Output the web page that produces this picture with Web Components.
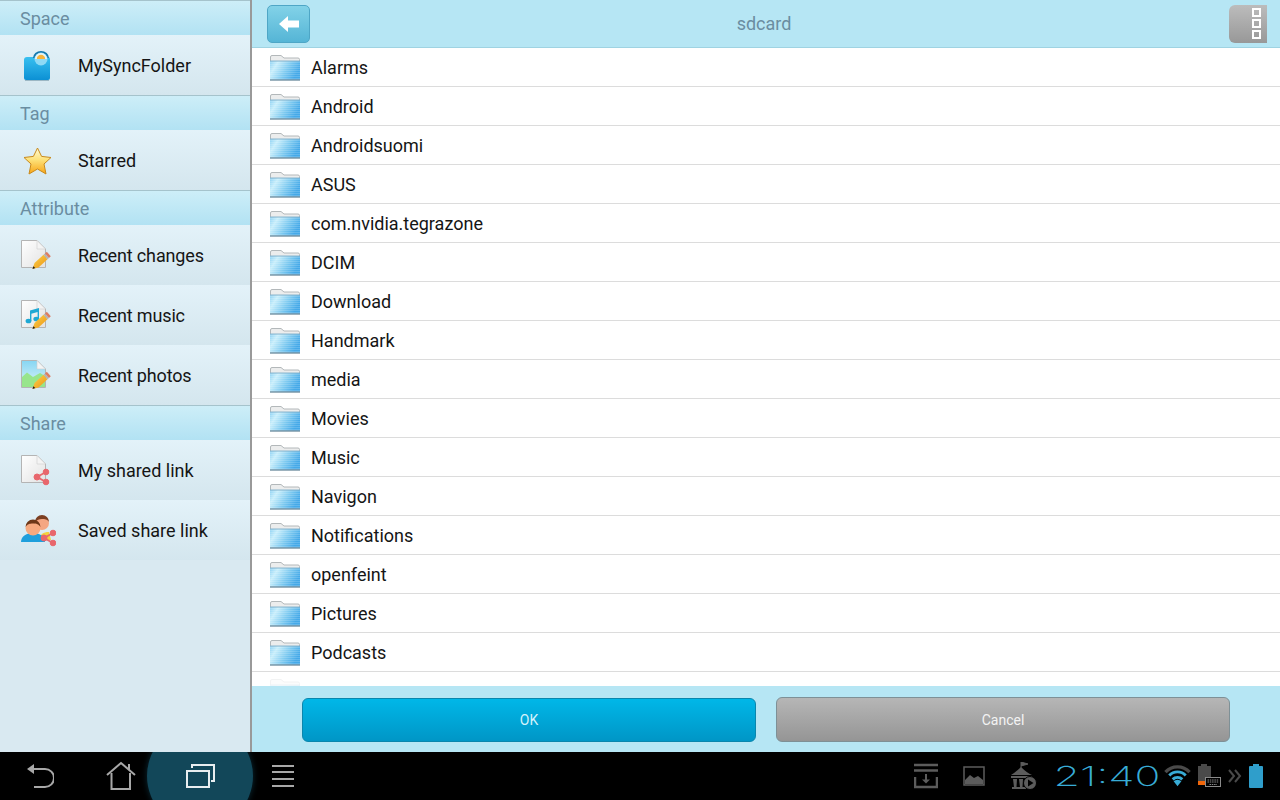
<!doctype html>
<html>
<head>
<meta charset="utf-8">
<title>sdcard</title>
<style>
  html, body { margin: 0; height: 100%; overflow: hidden; background: #000; }
</style>
</head>
<body>
<file-app>
  <side-panel slot="side">
    <side-header>Space</side-header>
    <side-item icon="sync">MySyncFolder</side-item>
    <side-header>Tag</side-header>
    <side-item icon="star">Starred</side-item>
    <side-header>Attribute</side-header>
    <side-item icon="changes" tight>Recent changes</side-item>
    <side-item icon="music" tight>Recent music</side-item>
    <side-item icon="photos" tight>Recent photos</side-item>
    <side-header>Share</side-header>
    <side-item icon="shared">My shared link</side-item>
    <side-item icon="saved">Saved share link</side-item>
  </side-panel>
  <top-bar slot="main">sdcard</top-bar>
  <file-list slot="main">
    <file-row>Alarms</file-row>
    <file-row>Android</file-row>
    <file-row>Androidsuomi</file-row>
    <file-row>ASUS</file-row>
    <file-row>com.nvidia.tegrazone</file-row>
    <file-row>DCIM</file-row>
    <file-row>Download</file-row>
    <file-row>Handmark</file-row>
    <file-row>media</file-row>
    <file-row>Movies</file-row>
    <file-row>Music</file-row>
    <file-row>Navigon</file-row>
    <file-row>Notifications</file-row>
    <file-row>openfeint</file-row>
    <file-row>Pictures</file-row>
    <file-row>Podcasts</file-row>
    <file-row faded></file-row>
  </file-list>
  <action-bar slot="main"></action-bar>
  <system-bar slot="bar"></system-bar>
</file-app>

<script>
/* Gradients are shared by every icon, so each svg carries its own copy of the defs. */
const DEFS = `<defs>
  <linearGradient id="fb" x1="0" y1="0" x2="0" y2="1"><stop offset="0" stop-color="#38c0f0"/><stop offset="1" stop-color="#0c90d4"/></linearGradient>
  <linearGradient id="st" x1="0" y1="0" x2="0" y2="1"><stop offset="0" stop-color="#fffbd6"/><stop offset=".45" stop-color="#fde27a"/><stop offset="1" stop-color="#f8a414"/></linearGradient>
  <linearGradient id="dc" x1="0" y1="0" x2="1" y2="1"><stop offset="0" stop-color="#ffffff"/><stop offset="1" stop-color="#e2e2e2"/></linearGradient>
  <linearGradient id="pn" x1="0" y1="0" x2="1" y2="1"><stop offset="0" stop-color="#fbd550"/><stop offset="1" stop-color="#ec9210"/></linearGradient>
  <linearGradient id="sk" x1="0" y1="0" x2="0" y2="1"><stop offset="0" stop-color="#86d6f3"/><stop offset="1" stop-color="#dff4f9"/></linearGradient>
</defs>`;

const DOC = `<path d="M1.5 3.5H17L25.5 12V30.5H1.5Z" fill="url(#dc)" stroke="#b4b4b4"/><path d="M17 3.5V12H25.5Z" fill="#f4f4f4" stroke="#cfcfcf" stroke-width=".6"/>`;
const PENCIL = `<path d="M12.5 32L14.500 26.100L23.500 17.800L27.500 22.200L18.500 30.500Z" fill="url(#pn)"/>
  <path d="M23.500 17.800L25 16.500L29 20.900L27.500 22.200Z" fill="#b4b4b4"/>
  <path d="M25 16.500L26.800 14.800L30.800 19.200L29 20.900Z" fill="#dd7d62"/>
  <path d="M12.500 32L13.400 29.300L15.300 31.100Z" fill="#1c1c1c"/>`;
const SHARE = (x, y) => `<g transform="translate(${x} ${y})" stroke="#e8666c" fill="#e8666c"><path d="M9 0L0 5L9 10" fill="none" stroke-width="1.8"/><circle cx="9" cy="0" r="2.800"/><circle cx="0" cy="5" r="3"/><circle cx="9" cy="10" r="2.800"/></g>`;

const SIDE_ICONS = {
  sync: `<path d="M4 13a3 3 0 0 1 3-3h21a2 2 0 0 1 2 2v19a2 2 0 0 1-2 2H6a2 2 0 0 1-2-2Z" fill="url(#fb)"/><path d="M5 33.500h24" stroke="#9cb7c4"/>
    <path d="M13 11a8 7 0 0 1 16 0" fill="#1478ad"/><circle cx="21" cy="12" r="6.500" fill="#8fdaf5"/><path d="M15 12a6 6 0 0 1 12 0Z" fill="#e6f5fa"/><path d="M16.800 12a4.200 4.200 0 0 1 8.400 0Z" fill="#f7b53c"/>`,
  star: `<path d="M17.500 6L21.600 14.400L31 15.500L24 22L26 32L17.500 27L9 32L11 22L4 15.500L13.400 14.400Z" fill="url(#st)" stroke="#c98a1c" stroke-linejoin="round"/>`,
  changes: DOC + PENCIL,
  music: DOC + `<path d="M10 13.500L19 11V22H17.600V15L11.400 16.800V24H10Z" fill="#1fa8d4"/><ellipse cx="8.500" cy="24" rx="2.900" ry="2.300" fill="#1fa8d4"/><ellipse cx="16.300" cy="22" rx="2.900" ry="2.300" fill="#1fa8d4"/>` + PENCIL,
  photos: `<path d="M1.5 3.5H17L25.5 12V30.5H1.5Z" fill="url(#sk)" stroke="#b4b4b4"/><path d="M2 30V20L7 15.500L13 20L20 16L25 19V30Z" fill="#98e58c"/><path d="M17 3.5V12H25.5Z" fill="#f4f4f4" stroke="#cfcfcf" stroke-width=".6"/>` + PENCIL,
  shared: DOC + SHARE(17, 20),
  saved: `<circle cx="22" cy="11" r="7" fill="#f4a683"/><path d="M15 10a7 7 0 0 1 14 0c-2-3-4-3-7-3s-5 1-7 3Z" fill="#7b3f22"/><path d="M20 28c0-6 3-8 9-8l2 8Z" fill="#f3d13e"/>
    <path d="M1 30c0-6 6-9 12-9s12 3 12 9Z" fill="#1f9fdc"/><circle cx="13" cy="16" r="7.500" fill="#f6a97f"/><path d="M5.500 15a7.500 7.500 0 0 1 15 0c-2-3-4-3.500-7.500-3.500S7.500 12 5.500 15Z" fill="#6d3718"/>` + SHARE(24, 21),
};

const sideIcon = name =>
  `<svg width="36" height="36" viewBox="0 0 36 36" aria-hidden="true">${DEFS}${SIDE_ICONS[name]}</svg>`;

const FOLDER = `<svg width="32" height="28" viewBox="0 0 32 28" aria-hidden="true">
  <defs>
    <linearGradient id="fo" x1="0" y1="0" x2="1" y2=".4"><stop offset="0" stop-color="#8ed2f4"/><stop offset=".25" stop-color="#c8eefb"/><stop offset=".65" stop-color="#7cc9f0"/><stop offset="1" stop-color="#45a9e8"/></linearGradient>
    <pattern id="ln" width="2" height="2" patternUnits="userSpaceOnUse"><rect width="2" height="1" fill="#fff" fill-opacity=".16"/></pattern>
  </defs>
  <path d="M1.500 7V3a1.500 1.500 0 0 1 1.500-1.500h9L15 4H29a1.500 1.500 0 0 1 1.500 1.500V9H1.500Z" fill="#eceded" stroke="#b3b8ba"/>
  <rect x="1" y="7" width="30" height="19" fill="url(#fo)"/>
  <rect x="1" y="7" width="30" height="19" fill="url(#ln)"/>
  <path d="M1 7H31" stroke="#8ab4cc"/>
  <path d="M1 26H31" stroke="#7d98a8" stroke-width="1.500"/>
</svg>`;

class FileApp extends HTMLElement {
  constructor() {
    super();
    this.attachShadow({ mode: 'open' }).innerHTML = `
      <style>
        :host { display: grid; grid-template-columns: 250px 1fr; grid-template-rows: 752px 48px; width: 1280px; height: 800px; font-family: Roboto, "Liberation Sans", sans-serif; }
        .main { display: flex; flex-direction: column; min-height: 0; border-left: 2px solid #999; background: #b6e6f4; }
        .bar { grid-column: 1 / -1; display: block; }
      </style>
      <slot name="side"></slot>
      <div class="main"><slot name="main"></slot></div>
      <div class="bar"><slot name="bar"></slot></div>`;
  }
}

class SidePanel extends HTMLElement {
  constructor() {
    super();
    this.attachShadow({ mode: 'open' }).innerHTML = `
      <style>:host { display: flex; flex-direction: column; background: #d9e9f1; }</style>
      <slot></slot>`;
  }
}

class SideHeader extends HTMLElement {
  constructor() {
    super();
    this.attachShadow({ mode: 'open' }).innerHTML = `
      <style>
        :host { display: flex; align-items: center; box-sizing: border-box; height: 35px; padding: 1px 0 0 20px; font-size: 18px; color: #6a8da1;
          border-top: 1px solid #a5c3cc; background: linear-gradient(#cdeef8, #b2e2f3); }
      </style>
      <slot></slot>`;
  }
}

class SideItem extends HTMLElement {
  constructor() {
    super();
    this.attachShadow({ mode: 'open' }).innerHTML = `
      <style>
        :host { display: flex; align-items: center; gap: 22px; height: 60px; padding-left: 20px; font-size: 18px; color: #151515;
          background: linear-gradient(#e3f2f9, #d4e6ee); }
        :host([tight]) { letter-spacing: -.15px; }
        svg { display: block; flex: none; }
      </style>
      ${sideIcon(this.getAttribute('icon'))}
      <slot></slot>`;
  }
}

class TopBar extends HTMLElement {
  constructor() {
    super();
    this.attachShadow({ mode: 'open' }).innerHTML = `
      <style>
        :host { display: flex; align-items: center; flex: none; box-sizing: border-box; height: 48px; padding: 0 13px 0 15px; border-bottom: 1px solid #9fd3e2; background: #b6e6f4; }
        .back { box-sizing: border-box; width: 43px; height: 38px; display: flex; align-items: center; justify-content: center; border: 1px solid #4ea6c6; border-radius: 5px; background: linear-gradient(#82d2e8, #55b5d6); }
        .title { flex: 1; text-align: center; padding-right: 11px; font-size: 18px; color: #6a8da1; }
        .menu { box-sizing: border-box; width: 38px; height: 38px; display: flex; flex-direction: column; align-items: flex-end; justify-content: center; gap: 2px; padding-right: 6px; border-radius: 6px 0 0 6px; background: linear-gradient(#bcbcbc, #989898); }
        .menu i { display: block; box-sizing: border-box; width: 9px; height: 9px; border: 2px solid #fff; }
      </style>
      <div class="back"><svg width="22" height="18" viewBox="0 0 22 18" aria-hidden="true"><path d="M1 9L10 1V5.500H21V12.500H10V17Z" fill="#fff"/></svg></div>
      <div class="title"><slot></slot></div>
      <div class="menu"><i></i><i></i><i></i></div>`;
  }
}

class FileList extends HTMLElement {
  constructor() {
    super();
    this.attachShadow({ mode: 'open' }).innerHTML = `
      <style>:host { display: block; flex: 1; min-height: 0; overflow: hidden; background: #fff; }</style>
      <slot></slot>`;
  }
}

class FileRow extends HTMLElement {
  constructor() {
    super();
    this.attachShadow({ mode: 'open' }).innerHTML = `
      <style>
        :host { display: flex; align-items: center; gap: 10px; box-sizing: border-box; height: 39px; padding-left: 17px; border-bottom: 1px solid #dcdcdc; font-size: 18px; color: #151515; }
        :host([faded]) svg { opacity: .16; }
        svg { display: block; flex: none; margin-top: 2px; }
      </style>
      ${FOLDER}
      <slot></slot>`;
  }
}

class ActionBar extends HTMLElement {
  constructor() {
    super();
    this.attachShadow({ mode: 'open' }).innerHTML = `
      <style>
        :host { display: flex; flex: none; gap: 20px; box-sizing: border-box; height: 66px; padding: 11px 50px 0; background: #b6e6f4; }
        button { flex: 1; box-sizing: border-box; height: 45px; padding: 0; border-radius: 6px; font: 400 14px Roboto, "Liberation Sans", sans-serif; }
        .ok { margin-top: 1px; height: 44px; border: 1px solid #0a86ad; color: #d4f2fb; background: linear-gradient(#00b7e8, #0096c6); }
        .cancel { border: 1px solid #7e9096; color: #f3f3f3; background: linear-gradient(#b6b6b6, #959595); }
      </style>
      <button class="ok" type="button">OK</button>
      <button class="cancel" type="button">Cancel</button>`;
  }
}

class SystemBar extends HTMLElement {
  constructor() {
    super();
    this.attachShadow({ mode: 'open' }).innerHTML = `
      <style>
        :host { display: flex; align-items: center; position: relative; height: 48px; overflow: hidden; background: #000; }
        .glow { position: absolute; left: 147px; top: -29px; width: 106px; height: 106px; border-radius: 50%; background: #124759; box-shadow: 0 0 6px #0b2c38; }
        svg { display: block; flex: none; position: relative; }
        .nav { display: flex; align-items: center; }
        .status { display: flex; align-items: center; margin-left: auto; }
        .clock { font: 200 27.5px Inter, Lato, sans-serif; color: #38acd6; width: 104px; text-align: center; transform: scaleX(1.56); margin-left: 17px; margin-right: 5px; white-space: nowrap; }
      </style>
      <div class="glow"></div>
      <div class="nav">
        <svg style="margin-left:26px" width="28" height="26" viewBox="0 0 28 26" fill="none" stroke="#a8a8a8" stroke-width="2"><path d="M3 6H19a7.500 7.500 0 0 1 0 18H8"/><path d="M1 6L8 1V11Z" fill="#a8a8a8" stroke="none"/></svg>
        <svg style="margin-left:52px" width="30" height="30" viewBox="0 0 30 30" fill="none" stroke="#a8a8a8" stroke-width="2"><path d="M1 14L15 2L29 14"/><path d="M5.500 12V28H24V12"/><path d="M23 3V9"/></svg>
        <svg style="margin-left:50px" width="30" height="26" viewBox="0 0 30 26" fill="none" stroke="#e8eef0" stroke-width="2"><rect x="1" y="8" width="22" height="16"/><path d="M6 5V2H28V18H25"/></svg>
        <svg style="margin-left:55px" width="24" height="24" viewBox="0 0 24 24" fill="#a8a8a8"><rect x="1" y="1" width="22" height="2"/><rect x="1" y="7" width="22" height="2"/><rect x="1" y="14" width="22" height="2"/><rect x="1" y="21" width="22" height="2"/></svg>
      </div>
      <div class="status">
        <svg width="24" height="26" viewBox="0 0 24 26" fill="none" stroke="#5c5c5c" stroke-width="2.500"><path d="M0 2H24M0 7.500H24"/><path d="M1 14V24H23V14"/><path d="M12 11V18" stroke-width="2"/><path d="M8 16.500H16L12 20.500Z" fill="#5c5c5c" stroke="none"/></svg>
        <svg style="margin-left:24px" width="24" height="22" viewBox="0 0 24 22" fill="none" stroke="#5c5c5c" stroke-width="1.500"><rect x="2" y="2" width="20" height="18"/><path d="M3 19V15L8 10L12 13L16 11L21 15V19Z" fill="#5c5c5c" stroke="none"/></svg>
        <svg style="margin-left:23px" width="29" height="28" viewBox="0 0 29 28" fill="#5c5c5c"><path d="M12 0V6M12 0L19 2L12 4" stroke="#5c5c5c"/><path d="M2 13Q6 11 12 5Q18 11 23 13Z"/><rect x="2" y="14" width="21" height="2"/><path d="M4 17H8L7.500 25H5Z"/><path d="M10 17H14L13.500 25H11Z"/><rect x="16" y="17" width="3" height="6"/><rect x="3" y="25" width="14" height="2"/><circle cx="21" cy="21" r="6.500" stroke="#000"/><path d="M19 17.500V24.500L24.500 21Z" fill="#000"/></svg>
        <div class="clock">21:40</div>
        <svg width="27" height="22" viewBox="0 0 28 22" fill="none"><path d="M1.500 7a17 17 0 0 1 25 0" stroke="#4a4a4a" stroke-width="3.500"/><path d="M5.500 10.500a11.500 11.500 0 0 1 17 0" stroke="#38acd6" stroke-width="3"/><path d="M9 14.500a7 7 0 0 1 10 0" stroke="#38acd6" stroke-width="3"/><path d="M10 16.500L14 21.500L18 16.500a5.500 5.500 0 0 0-8 0Z" fill="#38acd6"/></svg>
        <svg style="margin-left:5px" width="26" height="26" viewBox="0 0 26 26"><rect x="2" y="3" width="13" height="18" fill="#4a4a4a"/><rect x="5" y="1" width="6" height="2" fill="#4a4a4a"/><rect x="2" y="18" width="8" height="4" fill="#f0660a"/><rect x="9.500" y="14.500" width="15" height="9" fill="#000" stroke="#8a8a8a"/><path d="M11.500 17H23M11.500 19H23M13.500 21.500H21" stroke="#8a8a8a" stroke-dasharray="1.500 .8"/></svg>
        <svg style="margin-left:6px" width="14" height="14" viewBox="0 0 14 14" fill="none" stroke="#4a4a4a" stroke-width="2"><path d="M1 1L6 7L1 13M7 1L12 7L7 13"/></svg>
        <svg style="margin-left:7px;margin-right:17px" width="14" height="24" viewBox="0 0 14 24" fill="#2f9ecb"><rect x="4" y="0" width="6" height="3"/><rect x="0" y="2" width="14" height="22" rx="1"/></svg>
      </div>`;
  }
}

customElements.define('file-app', FileApp);
customElements.define('side-panel', SidePanel);
customElements.define('side-header', SideHeader);
customElements.define('side-item', SideItem);
customElements.define('top-bar', TopBar);
customElements.define('file-list', FileList);
customElements.define('file-row', FileRow);
customElements.define('action-bar', ActionBar);
customElements.define('system-bar', SystemBar);
</script>
</body>
</html>
